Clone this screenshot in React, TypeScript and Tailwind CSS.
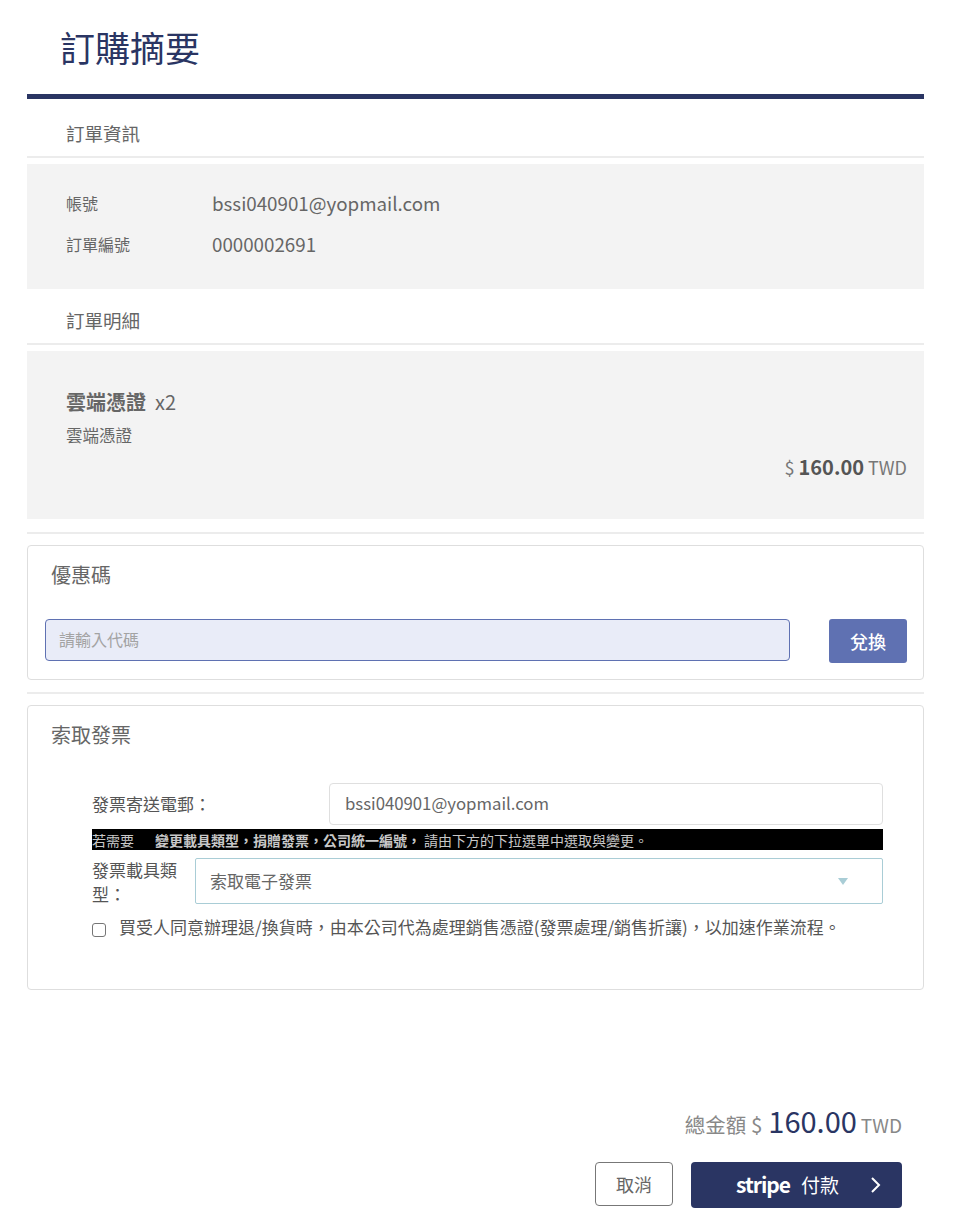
const font = { fontFamily: '"Noto Sans CJK TC", "Noto Sans", sans-serif' };

function Rule({ className = "" }: { className?: string }) {
  return <div className={`h-[2px] bg-[#ececec] ${className}`} />;
}

export default function App() {
  return (
    <div lang="zh-TW" style={font} className="w-[960px] h-[1222px] bg-white text-[#666666] overflow-hidden">
      <div className="mx-[27px] w-[897px]">
        <div className="h-[94px] pl-[33px] pt-[21px]">
          <h1 className="text-[35px] leading-[52px] text-[#2a3563]">訂購摘要</h1>
        </div>
        <div className="h-[5px] bg-[#2a3563]" />

        <div className="h-[57px] pl-[39px] pt-[21px] text-[18.5px] leading-[27px]">訂單資訊</div>
        <Rule />
        <div className="mt-[6px] h-[125px] bg-[#f3f3f3] pl-[39px] pt-[19px]">
          <div className="flex items-center h-[40px]">
            <div className="w-[146px] text-[16px]">帳號</div>
            <div className="text-[18.75px]">bssi040901@yopmail.com</div>
          </div>
          <div className="flex items-center h-[40px] mt-[1px]">
            <div className="w-[146px] text-[16px]">訂單編號</div>
            <div className="text-[18.75px]">0000002691</div>
          </div>
        </div>

        <div className="h-[54px] pl-[39px] pt-[18px] text-[18.5px] leading-[27px]">訂單明細</div>
        <Rule />
        <div className="mt-[6px] h-[168px] bg-[#f3f3f3] pl-[39px] pr-[17px] pt-[36px]">
          <div className="text-[20px] leading-[30px]">
            <span className="font-bold">雲端憑證</span>
            <span className="ml-[9px]">x2</span>
          </div>
          <div className="mt-[6px] text-[16.5px] leading-[24px]">雲端憑證</div>
          <div className="mt-[6px] text-right text-[18px] leading-[27px] text-[#777777]">
            $ <span className="text-[20px] font-bold text-[#555555]">160.00</span> TWD
          </div>
        </div>

        <Rule className="mt-[13px]" />

        <div className="mt-[11px] h-[135px] rounded-[4px] border border-[#dedede] pl-[17px] pr-[16px] pt-[14px]">
          <div className="pl-[6px] text-[20px] leading-[30px]">優惠碼</div>
          <div className="mt-[29px] flex">
            <div className="flex items-center h-[42px] w-[746px] rounded-[4px] border border-[#5f71b2] bg-[#e9ecf8] pl-[13px] pb-[2px] text-[16px] text-[#a3a3a3]">
              請輸入代碼
            </div>
            <button className="ml-[39px] h-[44px] w-[78px] rounded-[3px] bg-[#5f71b2] text-[18px] font-medium text-white">
              兌換
            </button>
          </div>
        </div>

        <Rule className="mt-[12px]" />

        <div className="mt-[11px] h-[285px] rounded-[4px] border border-[#dedede] pt-[14px]">
          <div className="pl-[23px] text-[20px] leading-[30px]">索取發票</div>
          <div className="ml-[64px] mr-[40px] mt-[33px]">
            <div className="flex items-center h-[42px]">
              <div className="w-[237px] text-[17px] text-[#555555]">發票寄送電郵：</div>
              <div className="flex items-center flex-1 h-[42px] rounded-[4px] border border-[#dfdfdf] pl-[15px] text-[16.75px]">
                bssi040901@yopmail.com
              </div>
            </div>
            <div className="mt-[4px] h-[21px] bg-black text-[14px] leading-[22px] text-[#c8c8c8] whitespace-nowrap overflow-hidden">
              若需要<span className="ml-[21px] mr-[3px] font-bold">變更載具類型，捐贈發票，公司統一編號，</span>請由下方的下拉選單中選取與變更。
            </div>
            <div className="mt-[8px] flex">
              <div className="w-[103px] pr-[12px] text-[17px] leading-[24px] text-[#555555]">發票載具類型：</div>
              <div className="flex items-center justify-between flex-1 h-[46px] rounded-[2px] border border-[#a9cdd6] pl-[14px] pr-[34px] text-[17px]">
                <span>索取電子發票</span>
                <span className="h-0 w-0 border-x-[5px] border-t-[7px] border-x-transparent border-t-[#a9cdd6]" />
              </div>
            </div>
            <div className="mt-[8px] flex items-start text-[17px] leading-[26px] text-[#555555] whitespace-nowrap">
              <input type="checkbox" className="mt-[9px] h-[14px] w-[14px] appearance-none rounded-[3px] border border-[#767676] bg-white" />
              <span className="ml-[13px]">買受人同意辦理退/換貨時，由本公司代為處理銷售憑證(發票處理/銷售折讓)，以加速作業流程。</span>
            </div>
          </div>
        </div>

        <div className="mt-[107px] mr-[22px] flex items-baseline justify-end h-[46px] leading-[46px] text-[20.5px] text-[#888888]">
          <span>總金額 $</span>
          <span className="ml-[6px] text-[29px] text-[#2a3563]">160.00</span>
          <span className="ml-[4px] text-[19px]">TWD</span>
        </div>

        <div className="mt-[19px] mr-[22px] flex justify-end items-start">
          <button className="h-[44px] w-[78px] rounded-[4px] border border-[#777777] bg-white text-[18px]">取消</button>
          <button className="ml-[18px] flex items-center h-[46px] w-[211px] rounded-[4px] bg-[#2a3563] text-white pl-[45px] pr-[20px]">
            <span className="text-[21px] font-bold tracking-[-1px] leading-none pb-[2px]">stripe</span>
            <span className="ml-[11px] text-[19px]">付款</span>
            <svg className="ml-auto" width="12" height="18" viewBox="0 0 12 18" fill="none" stroke="white" strokeWidth="2">
              <path d="M2 2l7 7-7 7" />
            </svg>
          </button>
        </div>
      </div>
    </div>
  );
}
